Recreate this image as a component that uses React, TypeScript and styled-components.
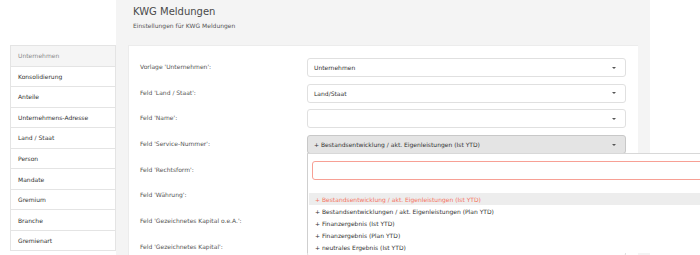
import React from "react";
import styled, { createGlobalStyle } from "styled-components";

const Global = createGlobalStyle`
  html, body {
    margin: 0;
    padding: 0;
    background: #ffffff;
    overflow: hidden;
    font-family: "DejaVu Sans", Verdana, sans-serif;
  }
`;

const Page = styled.div`
  display: flex;
  align-items: flex-start;
  width: 700px;
  height: 255px;
  overflow: hidden;
`;

const Sidebar = styled.ul`
  list-style: none;
  margin: 45px 0 0 10px;
  padding: 0;
  width: 106px;
  border-left: 1px solid #e4e4e4;
  border-right: 1px solid #e4e4e4;
  border-top: 1px solid #e4e4e4;
  box-sizing: border-box;
`;

const SideItem = styled.li<{ $active?: boolean }>`
  height: 20.55px;
  box-sizing: border-box;
  border-bottom: 1px solid #e4e4e4;
  display: flex;
  align-items: center;
  padding-left: 7px;
  font-size: 6px;
  color: ${(p) => (p.$active ? "#8a8a8a" : "#333")};
  background: ${(p) => (p.$active ? "#f5f5f5" : "#fff")};
`;

const Panel = styled.main`
  width: 534px;
  height: 255px;
  background: #f4f4f4;
  display: flex;
  flex-direction: column;
  box-sizing: border-box;
  padding: 6px 12px 0 12px;
`;

const Header = styled.header`
  padding-left: 5px;
  display: flex;
  flex-direction: column;
  gap: 4px;
`;

const Title = styled.h1`
  margin: 0;
  font-size: 10px;
  line-height: 12px;
  font-weight: normal;
  color: #4a4a4a;
`;

const Subtitle = styled.p`
  margin: 0;
  font-size: 6px;
  line-height: 8px;
  color: #555;
`;

const Card = styled.section`
  margin-top: 15px;
  flex: 1;
  min-height: 0;
  background: #fff;
  border-left: 1px solid #ececec;
  border-top: 1px solid #ececec;
  padding: 12px 11px 0 11px;
  display: flex;
  flex-direction: column;
  gap: 6.7px;
`;

const Row = styled.div`
  display: flex;
  align-items: center;
  height: 19px;
  flex-shrink: 0;
`;

const Label = styled.label`
  width: 167px;
  font-size: 6px;
  color: #555;
  padding-bottom: 2px;
`;

const SelectWrap = styled.div`
  position: relative;
  width: 319px;
  height: 19px;
`;

const SelectBox = styled.div<{ $open?: boolean }>`
  box-sizing: border-box;
  height: 19px;
  border: 1px solid ${(p) => (p.$open ? "#c8c8c8" : "#e0e0e0")};
  border-radius: 3px;
  background: ${(p) => (p.$open ? "#e4e4e4" : "#fff")};
  display: flex;
  align-items: center;
  justify-content: space-between;
  padding: 0 9px 0 6px;
  font-size: 6px;
  color: #333;
`;

const Arrow = styled.span`
  width: 0;
  height: 0;
  border-left: 2px solid transparent;
  border-right: 2px solid transparent;
  border-top: 2px solid #555;
`;

const Dropdown = styled.div`
  position: absolute;
  left: 0;
  top: 18px;
  width: 420px;
  background: #fff;
  border-left: 1px solid #cfcfcf;
  border-top: 1px solid #d8d8d8;
  box-sizing: border-box;
  padding: 7px 0 0 0;
  z-index: 5;
`;

const Search = styled.div`
  margin-left: 4px;
  height: 19px;
  box-sizing: border-box;
  border: 1px solid #f7a095;
  border-radius: 3px;
  background: #fff;
`;

const Options = styled.ul`
  list-style: none;
  margin: 13px 0 0 1px;
  padding: 0;
`;

const Option = styled.li<{ $hl?: boolean }>`
  height: 12px;
  display: flex;
  align-items: center;
  padding-left: 6px;
  font-size: 6px;
  color: ${(p) => (p.$hl ? "#f4735f" : "#333")};
  background: ${(p) => (p.$hl ? "#ededed" : "transparent")};
`;

const sideItems = [
  "Unternehmen",
  "Konsolidierung",
  "Anteile",
  "Unternehmens-Adresse",
  "Land / Staat",
  "Person",
  "Mandate",
  "Gremium",
  "Branche",
  "Gremienart",
];

const options = [
  "+ Bestandsentwicklung / akt. Eigenleistungen (Ist YTD)",
  "+ Bestandsentwicklungen / akt. Eigenleistungen (Plan YTD)",
  "+ Finanzergebnis (Ist YTD)",
  "+ Finanzergebnis (Plan YTD)",
  "+ neutrales Ergebnis (Ist YTD)",
];

type Field = { label: string; value?: string; open?: boolean };

const fields: Field[] = [
  { label: "Vorlage 'Unternehmen':", value: "Unternehmen" },
  { label: "Feld 'Land / Staat':", value: "Land/Staat" },
  { label: "Feld 'Name':", value: "" },
  {
    label: "Feld 'Service-Nummer':",
    value: "+ Bestandsentwicklung / akt. Eigenleistungen (Ist YTD)",
    open: true,
  },
  { label: "Feld 'Rechtsform':", value: "" },
  { label: "Feld 'Währung':", value: "" },
  { label: "Feld 'Gezeichnetes Kapital o.e.A.':", value: "" },
  { label: "Feld 'Gezeichnetes Kapital':", value: "" },
];

export default function App() {
  return (
    <>
      <Global />
      <Page>
        <Sidebar>
          {sideItems.map((s, i) => (
            <SideItem key={i} $active={i === 0}>
              {s}
            </SideItem>
          ))}
        </Sidebar>
        <Panel>
          <Header>
            <Title>KWG Meldungen</Title>
            <Subtitle>Einstellungen für KWG Meldungen</Subtitle>
          </Header>
          <Card>
            {fields.map((f, i) => (
              <Row key={i}>
                <Label>{f.label}</Label>
                <SelectWrap>
                  <SelectBox $open={f.open}>
                    <span>{f.value}</span>
                    <Arrow />
                  </SelectBox>
                  {f.open && (
                    <Dropdown>
                      <Search />
                      <Options>
                        {options.map((o, j) => (
                          <Option key={j} $hl={j === 0}>
                            {o}
                          </Option>
                        ))}
                      </Options>
                    </Dropdown>
                  )}
                </SelectWrap>
              </Row>
            ))}
          </Card>
        </Panel>
      </Page>
    </>
  );
}
